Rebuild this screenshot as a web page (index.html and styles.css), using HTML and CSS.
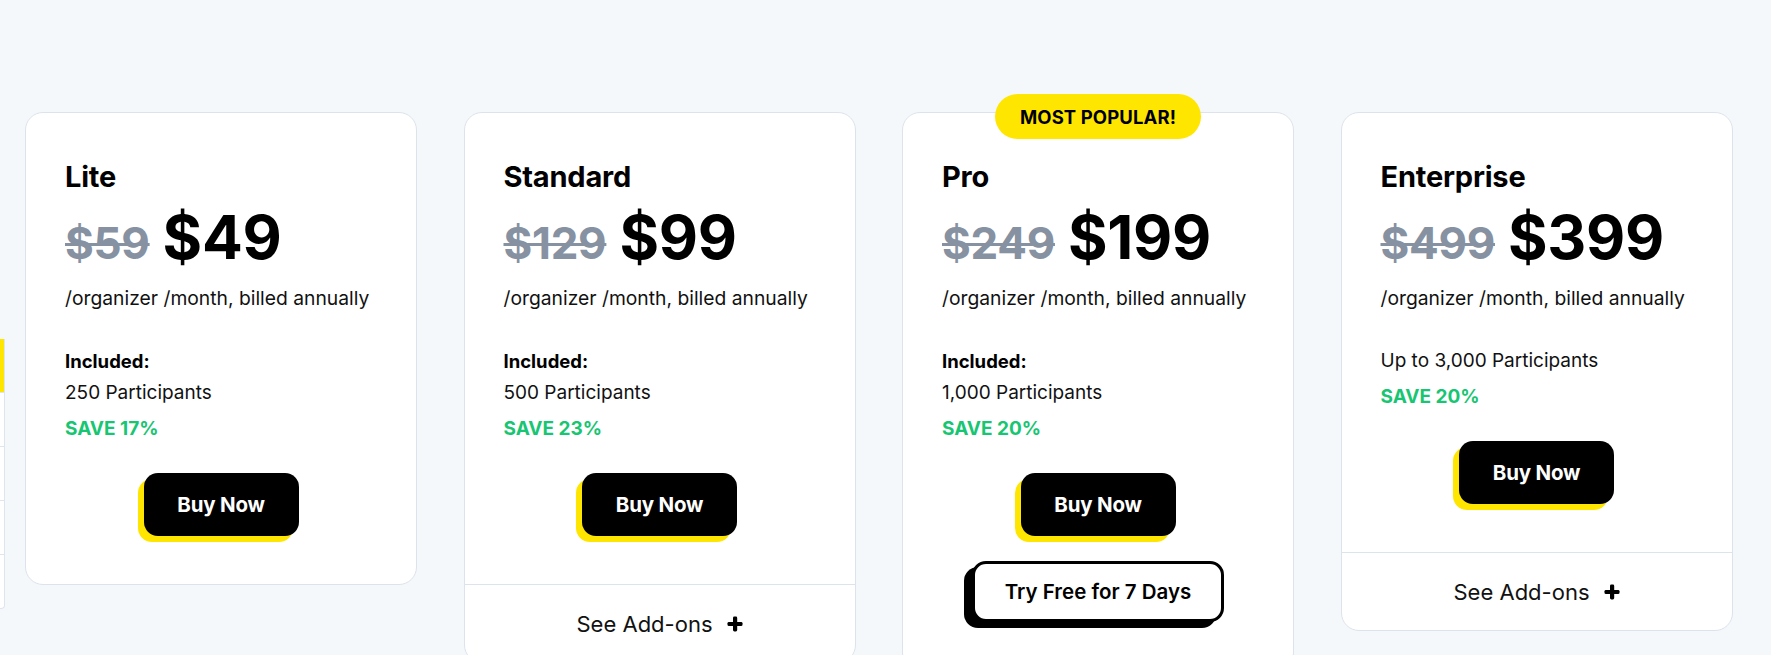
FILE: index.html
```html
<!DOCTYPE html>
<html lang="en">
<head>
<meta charset="utf-8">
<title>Pricing</title>
<link rel="stylesheet" href="styles.css">
</head>
<body>
<main class="pricing">
  <div class="sliver">
    <div class="sliver-head"></div>
    <div class="sliver-row"></div>
    <div class="sliver-row"></div>
    <div class="sliver-row"></div>
    <div class="sliver-row"></div>
  </div>

  <div class="card">
    <div class="card-body">
      <h3 class="plan">Lite</h3>
      <div class="price"><s class="old">$59</s><span class="new">$49</span></div>
      <p class="per">/organizer /month, billed annually</p>
      <p class="inc-label">Included:</p>
      <p class="inc">250 Participants</p>
      <p class="save">SAVE 17%</p>
      <div class="actions"><a class="btn-buy" href="#">Buy Now</a></div>
    </div>
  </div>

  <div class="card">
    <div class="card-body">
      <h3 class="plan">Standard</h3>
      <div class="price"><s class="old">$129</s><span class="new">$99</span></div>
      <p class="per">/organizer /month, billed annually</p>
      <p class="inc-label">Included:</p>
      <p class="inc">500 Participants</p>
      <p class="save">SAVE 23%</p>
      <div class="actions"><a class="btn-buy" href="#">Buy Now</a></div>
    </div>
    <div class="card-foot">See Add-ons
      <svg class="plus" viewBox="0 0 16 16" width="16" height="16"><rect x="6" y="0.5" width="4.2" height="15" rx="1.4"/><rect x="0.5" y="5.9" width="15" height="4.2" rx="1.4"/></svg>
    </div>
  </div>

  <div class="card">
    <span class="badge">MOST POPULAR!</span>
    <div class="card-body">
      <h3 class="plan">Pro</h3>
      <div class="price"><s class="old">$249</s><span class="new">$199</span></div>
      <p class="per">/organizer /month, billed annually</p>
      <p class="inc-label">Included:</p>
      <p class="inc">1,000 Participants</p>
      <p class="save">SAVE 20%</p>
      <div class="actions">
        <a class="btn-buy" href="#">Buy Now</a>
        <a class="btn-try" href="#">Try Free for 7 Days</a>
      </div>
    </div>
  </div>

  <div class="card">
    <div class="card-body">
      <h3 class="plan">Enterprise</h3>
      <div class="price"><s class="old">$499</s><span class="new">$399</span></div>
      <p class="per">/organizer /month, billed annually</p>
      <p class="inc inc-first">Up to 3,000 Participants</p>
      <p class="save">SAVE 20%</p>
      <div class="actions"><a class="btn-buy" href="#">Buy Now</a></div>
    </div>
    <div class="card-foot">See Add-ons
      <svg class="plus" viewBox="0 0 16 16" width="16" height="16"><rect x="6" y="0.5" width="4.2" height="15" rx="1.4"/><rect x="0.5" y="5.9" width="15" height="4.2" rx="1.4"/></svg>
    </div>
  </div>
</main>
</body>
</html>
```

FILE: styles.css
```css
html, body {
  margin: 0;
  padding: 0;
  background: #f5f8fa;
  overflow: hidden;
}

body {
  font-family: "Inter", "Liberation Sans", sans-serif;
  color: #0b0b0b;
}

.pricing {
  display: flex;
  align-items: flex-start;
  padding-top: 112px;
  gap: 46.5px;
}

.sliver {
  width: 4px;
  margin-top: 227px;
  margin-right: -26.5px;
  background: #fff;
  border: 1px solid #dfe5ee;
  border-left: none;
  border-top: none;
  border-radius: 0 0 4px 0;
  flex-shrink: 0;
}

.sliver-head {
  height: 53px;
  background: #ffe600;
}

.sliver-row {
  height: 53px;
  border-top: 1px solid #dfe5ee;
}

.sliver-row:first-of-type {
  border-top: none;
}

.card {
  position: relative;
  width: 392px;
  flex-shrink: 0;
  box-sizing: border-box;
  background: #fff;
  border: 1px solid #dde3ec;
  border-radius: 18px;
}

.card-body {
  padding: 46px 39px 48px;
}

.plan {
  margin: 0;
  font-size: 29px;
  line-height: 36px;
  font-weight: 700;
  letter-spacing: -0.2px;
  color: #000;
}

.price {
  margin-top: 7px;
  display: flex;
  align-items: baseline;
  gap: 13px;
  line-height: 70px;
  font-weight: 700;
}

.old {
  font-size: 44px;
  color: #8691a2;
  text-decoration-thickness: 3px;
  letter-spacing: -0.3px;
}

.new {
  font-size: 60.5px;
  color: #000;
  letter-spacing: -0.3px;
}

.per {
  margin: 8px 0 0;
  font-size: 19.3px;
  line-height: 24px;
  color: #111;
}

.inc-label {
  margin: 35px 0 0;
  font-size: 18.5px;
  line-height: 32px;
  font-weight: 700;
  color: #000;
}

.inc {
  margin: 0;
  font-size: 19px;
  line-height: 32px;
  color: #111;
}

.inc-first {
  margin-top: 35px;
}

.save {
  margin: 4px 0 0;
  font-size: 19px;
  line-height: 32px;
  font-weight: 700;
  color: #17c572;
}

.actions {
  margin-top: 28px;
  display: flex;
  flex-direction: column;
  align-items: center;
  gap: 25px;
}

.btn-buy {
  display: flex;
  align-items: center;
  justify-content: center;
  width: 155px;
  height: 63px;
  box-sizing: border-box;
  background: #000;
  color: #fff;
  border-radius: 14px;
  box-shadow: -6px 6px 0 #ffe600;
  font-size: 20.5px;
  font-weight: 700;
  text-decoration: none;
  letter-spacing: -0.2px;
}

.btn-try {
  display: flex;
  align-items: center;
  justify-content: center;
  width: 252px;
  height: 61px;
  box-sizing: border-box;
  background: #fff;
  color: #000;
  border: 3px solid #000;
  border-radius: 14px;
  box-shadow: -8px 6px 0 #000;
  font-size: 20.5px;
  font-weight: 600;
  text-decoration: none;
}

.card-foot {
  height: 76px;
  border-top: 1px solid #dde3ec;
  display: flex;
  align-items: center;
  justify-content: center;
  gap: 14px;
  font-size: 22px;
  color: #111;
  padding-top: 1px;
}

.plus {
  fill: #000;
  display: block;
}

.badge {
  position: absolute;
  top: -19px;
  left: 50%;
  transform: translateX(-50%);
  width: 206px;
  height: 45px;
  display: flex;
  align-items: center;
  justify-content: center;
  background: #ffe600;
  border-radius: 23px;
  font-size: 18.5px;
  font-weight: 700;
  color: #000;
  letter-spacing: 0.1px;
}
```
